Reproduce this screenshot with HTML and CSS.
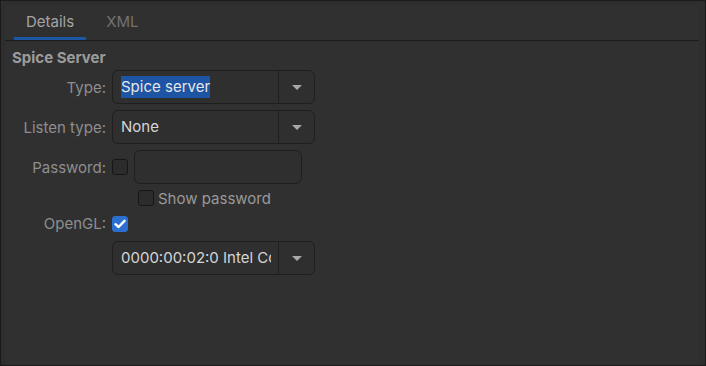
FILE: index.html
```html
<!DOCTYPE html>
<html>
<head>
<meta charset="utf-8">
<link rel="stylesheet" href="styles.css">
</head>
<body>
<div class="window">
  <div class="notebook">
    <div class="tabs">
      <div class="tab active">Details</div>
      <div class="tab">XML</div>
    </div>
    <div class="page">
      <div class="heading">Spice Server</div>
      <div class="form">
        <div class="label">Type:</div>
        <div class="combo"><div class="combo-text"><span class="sel">Spice server</span></div><div class="combo-btn"><span class="arrow"></span></div></div>

        <div class="label">Listen type:</div>
        <div class="combo"><div class="combo-text">None</div><div class="combo-btn"><span class="arrow"></span></div></div>

        <div class="label">Password:</div>
        <div class="pw-row"><span class="check"></span><div class="entry"></div></div>

        <div class="label empty"></div>
        <div class="show-row"><span class="check"></span><span class="show-text">Show password</span></div>

        <div class="label gl">OpenGL:</div>
        <div class="gl-row"><span class="check checked"><svg width="12" height="10" viewBox="0 0 12 10"><path d="M1.5 5.2 L4.6 8 L10.5 1.8" fill="none" stroke="#ffffff" stroke-width="2.4" stroke-linecap="round" stroke-linejoin="round"/></svg></span></div>

        <div class="label empty"></div>
        <div class="combo"><div class="combo-text clip">0000:00:02:0 Intel Corporation HD Graphics</div><div class="combo-btn"><span class="arrow"></span></div></div>
      </div>
    </div>
  </div>
</div>
</body>
</html>
```
FILE: styles.css
```css
html, body {
  margin: 0;
  padding: 0;
  background: #1b1b1b;
}
body {
  font-family: Inter, "Noto Sans", sans-serif;
  font-size: 15px;
}
.window {
  width: 706px;
  height: 366px;
  box-sizing: border-box;
  border: 1px solid #1a1a1a;
  background: #2e2e2e;
  padding: 4px 6px 0 4px;
}
.notebook {
  height: 100%;
  background: #303030;
}
.tabs {
  display: flex;
  gap: 8px;
  height: 36px;
  padding-left: 9px;
  border-bottom: 1px solid #1c1c1c;
  box-sizing: border-box;
}
.tab {
  padding: 0 12px;
  line-height: 33px;
  color: #727272;
  border-bottom: 3px solid transparent;
}
.tab.active {
  color: #a4a4a4;
  border-bottom-color: #1c57a6;
}
.page {
  padding: 7px 0 0 7px;
}
.heading {
  font-weight: 700;
  color: #9c9c9c;
  line-height: 20px;
  height: 20px;
}
.form {
  margin-top: 2px;
  display: grid;
  grid-template-columns: 94px auto;
  column-gap: 6px;
  row-gap: 6px;
  justify-content: start;
}
.label {
  text-align: right;
  color: #8e8e8e;
  align-self: center;
}
.label.gl {
  align-self: start;
  line-height: 23px;
}
.combo {
  width: 203px;
  height: 34px;
  box-sizing: border-box;
  border: 1px solid #1f1f1f;
  border-radius: 6px;
  background: #2f2f2f;
  display: flex;
}
.combo-text {
  flex: 1;
  padding-left: 8px;
  line-height: 32px;
  color: #d6d6d6;
  white-space: nowrap;
  overflow: hidden;
  width: 158px;
}
.combo-text.clip {
  flex: none;
  width: 150px;
}
.sel {
  background: #1d54a4;
  color: #e6e6e6;
  padding: 1px 0 2px;
}
.combo-btn {
  width: 35px;
  border-left: 1px solid #1f1f1f;
  display: flex;
  align-items: center;
  justify-content: center;
  margin-left: auto;
}
.arrow {
  width: 0;
  height: 0;
  border-left: 5px solid transparent;
  border-right: 5px solid transparent;
  border-top: 5px solid #a8a8a8;
}
.check {
  width: 16px;
  height: 16px;
  box-sizing: border-box;
  border: 1px solid #161616;
  border-radius: 3px;
  background: #2c2c2c;
  display: inline-flex;
  align-items: center;
  justify-content: center;
  flex: none;
}
.check.checked {
  background: #2b6fd1;
  border-color: #2b6fd1;
}
.pw-row {
  display: flex;
  align-items: center;
  gap: 6px;
  height: 34px;
}
.entry {
  width: 168px;
  height: 34px;
  box-sizing: border-box;
  border: 1px solid #1f1f1f;
  border-radius: 6px;
  background: #2f2f2f;
}
.show-row {
  display: flex;
  align-items: center;
  gap: 4px;
  height: 16px;
  padding-left: 26px;
}
.show-text {
  color: #999999;
  line-height: 16px;
  padding-top: 1px;
}
.gl-row {
  display: flex;
  align-items: flex-start;
  height: 22px;
  padding-top: 4px;
  box-sizing: border-box;
  margin-bottom: -2px;
}
```
